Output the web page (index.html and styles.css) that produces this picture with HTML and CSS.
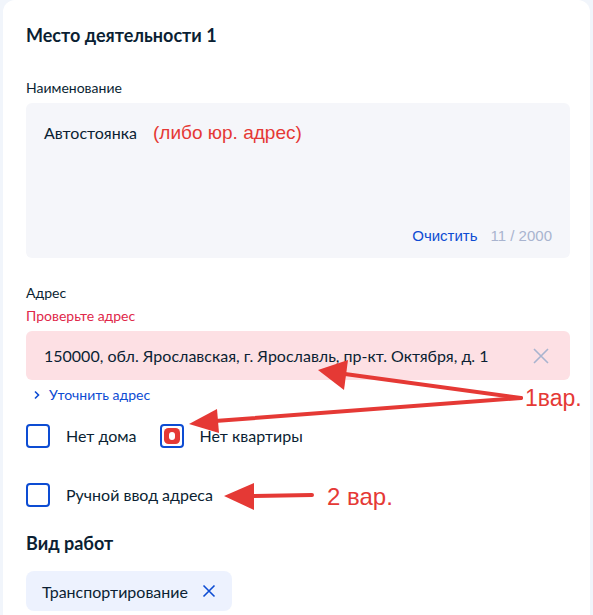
FILE: index.html
```html
<!DOCTYPE html>
<html lang="ru">

<head>
  <meta charset="UTF-8">
  <meta name="viewport" content="width=device-width, initial-scale=1.0">
  <title>Место деятельности</title>
  <link rel="stylesheet" href="styles.css">
</head>

<body>
  <div class="card">
    <h2 class="section-title">Место деятельности 1</h2>

    <div class="form-group">
      <label class="field-label">Наименование</label>
      <div class="textarea-box">
        <div class="textarea-value">Автостоянка <span class="note note-inline">(либо юр. адрес)</span></div>
        <div class="textarea-footer">
          <a class="link" href="#">Очистить</a>
          <span class="counter">11 / 2000</span>
        </div>
      </div>
    </div>

    <div class="form-group">
      <label class="field-label">Адрес</label>
      <div class="error-message">Проверьте адрес</div>
      <div class="address-box invalid">
        <span class="address-value">150000, обл. Ярославская, г. Ярославль, пр-кт. Октября, д. 1</span>
        <svg class="clear-icon" width="18" height="18" viewBox="0 0 18 18">
          <path d="M2 2L16 16M16 2L2 16" stroke="#a9b4cf" stroke-width="1.6" fill="none" />
        </svg>
      </div>
      <a class="refine-link" href="#">
        <svg width="8" height="10" viewBox="0 0 8 10">
          <path d="M2 1.5L5.5 5L2 8.5" stroke="#0d4cd3" stroke-width="1.6" fill="none" />
        </svg>
        Уточнить адрес
      </a>
    </div>

    <div class="checks-row">
      <label class="checkbox-label"><span class="checkbox"></span>Нет дома</label>
      <label class="checkbox-label">
        <span class="checkbox">
          <svg class="mark" width="18" height="18" viewBox="0 0 18 18">
            <rect x="1" y="1" width="16" height="16" rx="4.5" fill="#e53935" />
            <rect x="6" y="5" width="6" height="8" rx="3" fill="#fff" />
          </svg>
        </span>Нет квартиры
      </label>
    </div>

    <div class="checks-row checks-row-single">
      <label class="checkbox-label"><span class="checkbox"></span>Ручной ввод адреса</label>
    </div>

    <h3 class="sub-title">Вид работ</h3>
    <div class="chip">
      Транспортирование
      <svg width="14" height="14" viewBox="0 0 14 14">
        <path d="M1.5 1.5L12.5 12.5M12.5 1.5L1.5 12.5" stroke="#0d4cd3" stroke-width="1.6" fill="none" />
      </svg>
    </div>

    <!-- annotations drawn over the screenshot -->
    <svg class="arrows" width="593" height="615" viewBox="0 0 593 615">
      <g stroke="#e53935" stroke-width="4" stroke-linecap="round" fill="none">
        <path d="M521 398L345 374" />
        <path d="M521 398L215 421" />
        <path d="M312 495L252 496" />
      </g>
      <g fill="#e53935">
        <path d="M318 370L348 360L344 390Z" />
        <path d="M189 424L217 409L219 433Z" />
        <path d="M224 496L254 483L254 510Z" />
      </g>
    </svg>
    <span class="note note-var1">1вар.</span>
    <span class="note note-var2">2 вар.</span>
  </div>
</body>

</html>
```

FILE: styles.css
```css
body {
  margin: 0;
  background-color: #f1f5fb;
  font-family: Lato, "Noto Sans", sans-serif;
  color: #0b1f33;
}

.card {
  position: relative;
  width: 587px;
  height: 615px;
  margin-left: 3px;
  padding: 23px 20px 0 23px;
  box-sizing: border-box;
  background-color: #fff;
  border-radius: 12px 12px 0 0;
}

.section-title {
  margin: 0;
  font-size: 18px;
  line-height: 24px;
  font-weight: 700;
}

.form-group {
  margin-top: 31px;
}

.form-group + .form-group {
  margin-top: 25px;
}

.field-label {
  display: block;
  font-size: 14px;
  line-height: 20px;
  margin-bottom: 5px;
}

.textarea-box {
  height: 155px;
  padding: 18px 18px 12px 18px;
  box-sizing: border-box;
  background-color: #f5f6fa;
  border-radius: 6px;
  display: flex;
  flex-direction: column;
  justify-content: space-between;
}

.textarea-value {
  font-size: 16px;
  line-height: 24px;
}

.textarea-footer {
  display: flex;
  justify-content: flex-end;
  gap: 13px;
  font-family: "Liberation Sans", Arial, sans-serif;
  font-size: 15px;
  line-height: 20px;
}

.link {
  color: #0d4cd3;
  text-decoration: none;
}

.counter {
  color: #a9b4cf;
}

.error-message {
  color: #e0284a;
  font-size: 14px;
  line-height: 20px;
  margin-top: -2px;
  margin-bottom: 5px;
}

.address-box {
  height: 49px;
  padding: 0 20px 0 18px;
  box-sizing: border-box;
  display: flex;
  align-items: center;
  justify-content: space-between;
  border-radius: 6px;
  font-size: 16px;
}

.address-box.invalid {
  background-color: #fde0e4;
}

.refine-link {
  display: flex;
  align-items: center;
  gap: 8px;
  margin-top: 5px;
  padding-left: 7px;
  font-size: 14px;
  line-height: 20px;
  color: #0d4cd3;
  text-decoration: none;
}

.checks-row {
  display: flex;
  gap: 23px;
  margin-top: 19px;
}

.checks-row-single {
  margin-top: 35px;
}

.checkbox-label {
  display: flex;
  align-items: center;
  gap: 16px;
  font-size: 16px;
  line-height: 24px;
}

.checkbox {
  width: 24px;
  height: 24px;
  box-sizing: border-box;
  border: 2px solid #0d4cd3;
  border-radius: 4px;
  display: flex;
  align-items: center;
  justify-content: center;
}

.sub-title {
  margin: 24px 0 0;
  font-size: 18px;
  line-height: 24px;
  font-weight: 700;
}

.chip {
  display: inline-flex;
  align-items: center;
  gap: 14px;
  height: 40px;
  margin-top: 16px;
  padding: 0 16px;
  background-color: #edf2fe;
  border-radius: 8px;
  font-size: 16px;
}

.arrows {
  position: absolute;
  left: -3px;
  top: 0;
  pointer-events: none;
}

.note {
  font-family: "Liberation Sans", Arial, sans-serif;
  color: #e53935;
}

.note-inline {
  margin-left: 12px;
  font-size: 19px;
}

.note-var1,
.note-var2 {
  position: absolute;
  line-height: 26px;
}

.note-var1 {
  left: 522px;
  top: 385px;
  font-size: 23px;
}

.note-var2 {
  left: 324px;
  top: 484px;
  font-size: 24px;
}
```
